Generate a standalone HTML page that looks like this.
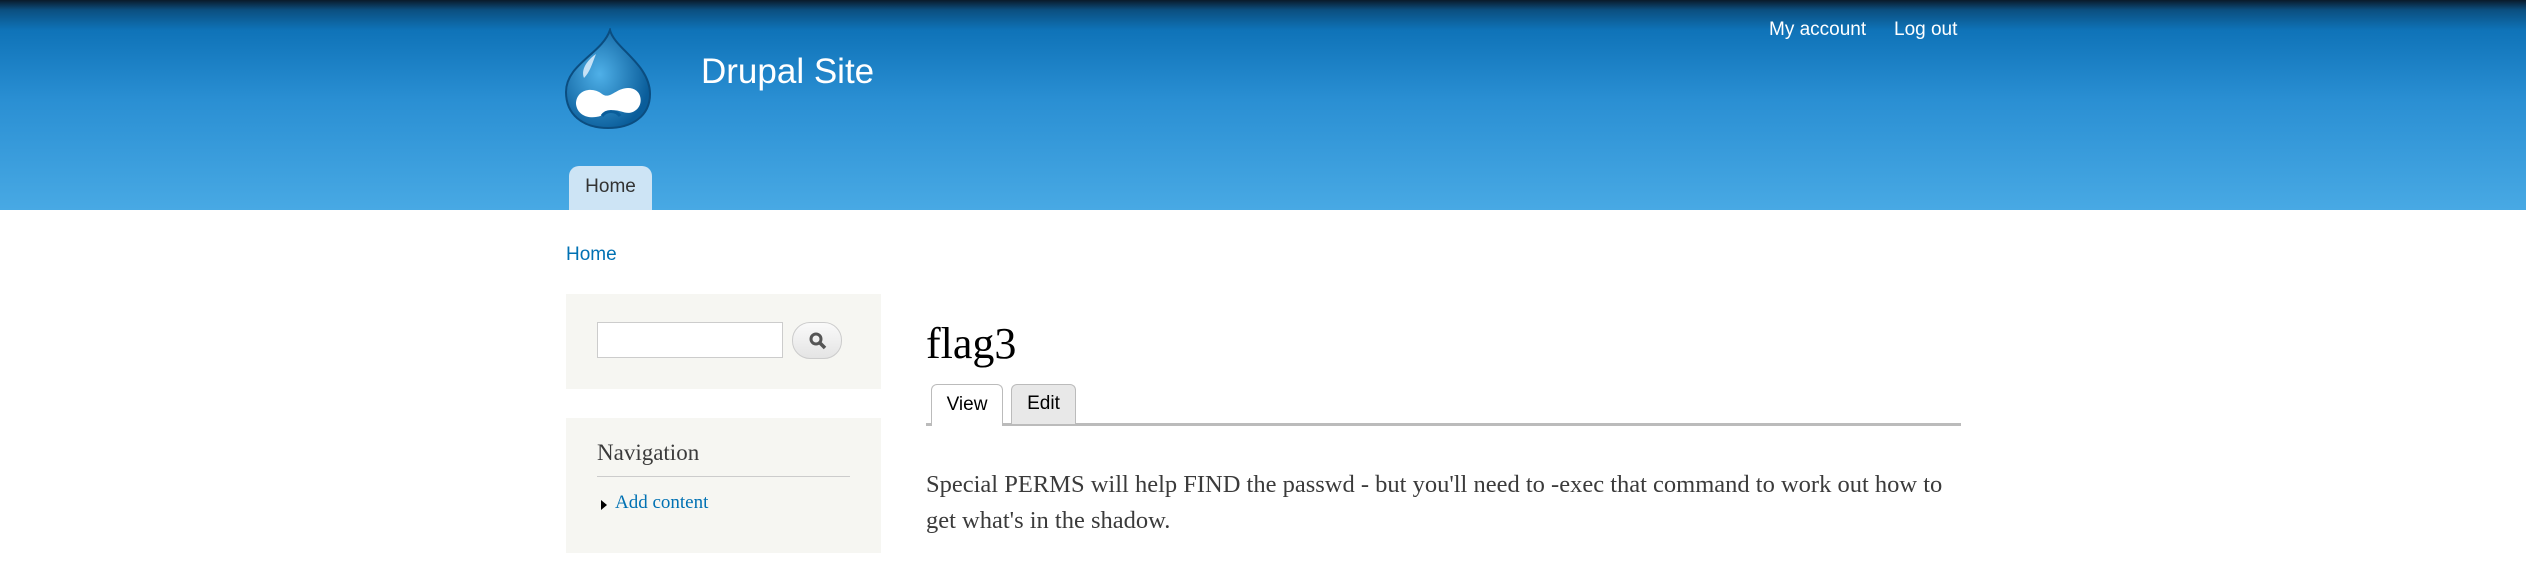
<!DOCTYPE html>
<html><head><meta charset="utf-8"><style>
*{margin:0;padding:0;box-sizing:border-box}
body{width:2526px;height:575px;background:#fff;position:relative;overflow:hidden;font-family:"Liberation Sans",sans-serif}
.hdr{position:absolute;left:0;top:0;width:2526px;height:210px;background:linear-gradient(#0a1a2a 0px,#0b4f80 10px,#0f73b8 30px,#2a8fd3 100px,#48a9e4 210px)}
.a{position:absolute;color:#fff;font-size:19px}
.tab{position:absolute;left:569px;top:166px;width:83px;height:44px;background:#cde4f5;border-radius:10px 10px 0 0;font-size:19px;color:#333;text-align:center;line-height:42px}
.blk{position:absolute;left:566px;width:315px;background:#f6f6f2}
.serif{font-family:"Liberation Serif",serif}
</style></head><body>
<div class="hdr"></div>
<svg style="position:absolute;left:562px;top:28px" width="92" height="102" viewBox="0 0 92 102">
<defs><radialGradient id="g" cx="40%" cy="45%" r="60%"><stop offset="0" stop-color="#4fb0e8"/><stop offset="1" stop-color="#0a5d9a"/></radialGradient></defs>
<path d="M48 2 C52 20 88 36 88 66 C88 88 70 100 46 100 C20 100 4 86 4 64 C4 36 40 26 48 2Z" fill="url(#g)" stroke="#0b4d80" stroke-width="2"/>
<path d="M22 50 C18 40 28 30 34 26 C30 36 28 44 22 50Z" fill="#e8f4ff" opacity=".8"/>
<path d="M14 76 C14 62 30 58 40 66 C48 72 54 60 66 60 C80 60 82 76 74 82 C64 90 56 78 46 84 C36 92 16 92 14 76Z" fill="#fff"/>
<path d="M40 88 C44 82 54 82 58 88" stroke="#0a5d9a" stroke-width="3" fill="none"/>
</svg>
<div class="a" style="left:701px;top:52px;font-size:35px">Drupal Site</div>
<div class="a" style="left:1769px;top:19px">My account</div>
<div class="a" style="left:1894px;top:19px">Log out</div>
<div class="tab">Home</div>
<div style="position:absolute;left:566px;top:244px;font-size:19px;color:#0071b3">Home</div>
<div class="blk" style="top:294px;height:95px">
<div style="position:absolute;left:31px;top:28px;width:186px;height:36px;background:#fff;border:1px solid #ccc"></div>
<div style="position:absolute;left:226px;top:28px;width:50px;height:37px;border-radius:18px;background:linear-gradient(#fafafa,#e4e4e4);border:1px solid #ccc"></div>
<svg style="position:absolute;left:242px;top:37px" width="20" height="20" viewBox="0 0 20 20"><circle cx="8" cy="8" r="5" stroke="#555" stroke-width="3" fill="none"/><path d="M12 12 L17 17" stroke="#555" stroke-width="3.5"/></svg>
</div>
<div class="blk" style="top:418px;height:135px">
<div class="serif" style="position:absolute;left:31px;top:22px;font-size:23px;color:#3b3b3b">Navigation</div>
<div style="position:absolute;left:31px;top:58px;width:253px;height:1px;background:#ccc"></div>
<div style="position:absolute;left:35px;top:82px;width:0;height:0;border-left:6px solid #000;border-top:5px solid transparent;border-bottom:5px solid transparent"></div>
<div class="serif" style="position:absolute;left:49px;top:74px;font-size:19px;color:#0071b3">Add content</div>
</div>
<div class="serif" style="position:absolute;left:926px;top:318px;font-size:44px;color:#000">flag3</div>
<div style="position:absolute;left:926px;top:423px;width:1035px;height:3px;background:#bbb"></div>
<div style="position:absolute;left:931px;top:384px;width:72px;height:42px;background:#fff;border:1px solid #bbb;border-bottom:none;border-radius:6px 6px 0 0;font-size:19px;text-align:center;line-height:40px;color:#000">View</div>
<div style="position:absolute;left:1011px;top:384px;width:65px;height:40px;background:#e8e8e8;border:1px solid #bbb;border-bottom:none;border-radius:6px 6px 0 0;font-size:19px;text-align:center;line-height:38px;color:#000">Edit</div>
<div class="serif" style="position:absolute;left:926px;top:467px;width:1040px;font-size:24.5px;line-height:36px;color:#3b3b3b">Special PERMS will help FIND the passwd - but you'll need to -exec that command to work out how to get what's in the shadow.</div>
</body></html>
